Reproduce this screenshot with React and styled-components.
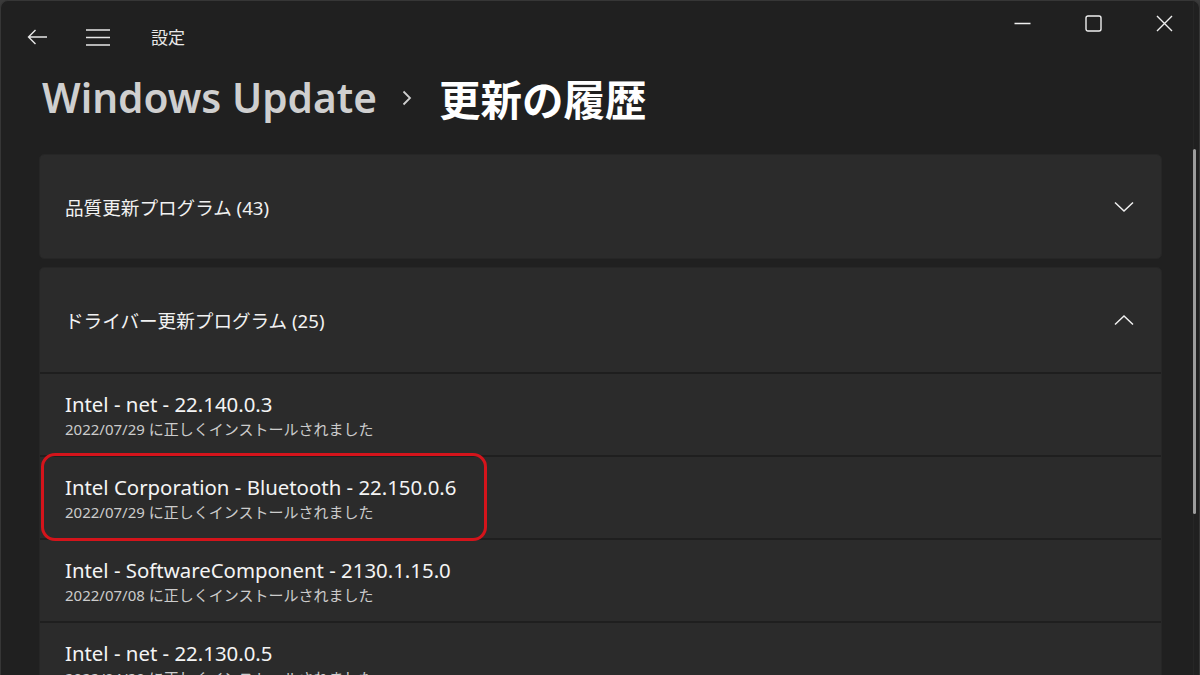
import React from "react";
import styled, { createGlobalStyle } from "styled-components";

const Global = createGlobalStyle`
  html, body { margin: 0; padding: 0; background: #3a3a3a; }
  body { font-family: "Noto Sans", "Noto Sans CJK JP", sans-serif; }
  * { box-sizing: border-box; }
`;

const Window = styled.div`
  position: relative;
  width: 1200px;
  height: 675px;
  background: #202020;
  border-radius: 8px 8px 0 0;
  border: 1px solid #363636;
  border-bottom: none;
  overflow: hidden;
  color: #fff;
`;

const TitleBar = styled.div`
  display: flex;
  align-items: flex-start;
  height: 73px;
`;

const NavGroup = styled.div`
  display: flex;
  align-items: center;
  height: 73px;
  padding-left: 25px;
`;

const IconButton = styled.div`
  display: flex;
  align-items: center;
  justify-content: center;
  width: ${(p) => p.w || 22}px;
  margin-right: ${(p) => p.mr || 0}px;
  margin-top: -1px;
`;

const AppTitle = styled.span`
  font-size: 17px;
  color: #e8e8e8;
  font-family: "Noto Sans CJK JP", sans-serif;
  margin-top: -2px;
`;

const Control = styled.div`
  width: 71px;
  display: flex;
  justify-content: center;
  align-items: center;
`;

const Controls = styled.div`
  display: flex;
  margin-left: auto;
  height: 45px;
  align-items: center;
  margin-right: -1px;
`;

const Header = styled.h1`
  margin: 0 0 32px 41px;
  display: flex;
  align-items: center;
  height: 48px;
  font-size: 40.6px;
  font-weight: 600;
  line-height: 48px;
  font-family: "Noto Sans", "Noto Sans CJK JP", sans-serif;
`;

const Crumb = styled.span`
  color: #cfcfcf;
`;

const Current = styled.span`
  color: #ffffff;
  font-family: "Noto Sans CJK JP", sans-serif;
  font-weight: 700;
  font-size: 41.5px;
`;

const CrumbSep = styled.span`
  display: flex;
  margin: 0 27px 0 25px;
`;

const Content = styled.div`
  display: flex;
  flex-direction: column;
  gap: 8px;
  margin-left: 38px;
  width: 1123px;
`;

const Card = styled.div`
  background: #2b2b2b;
  border-radius: 5px 5px ${(p) => (p.open ? "0 0" : "5px 5px")};
  border: 1px solid #262626;
  overflow: hidden;
`;

const CardHeader = styled.div`
  display: flex;
  align-items: center;
  height: ${(p) => (p.open ? 106 : 103)}px;
  padding: 0 27px 0 25px;
  border-bottom: ${(p) => (p.open ? "2px solid #1e1e1e" : "none")};
`;

const CardTitle = styled.span`
  font-size: 18.6px;
  color: #f2f2f2;
  flex: 1;
  margin-top: ${(p) => (p.open ? -2 : 0)}px;
  font-family: "Noto Sans", "Noto Sans CJK JP", sans-serif;
`;

const Item = styled.div`
  position: relative;
  height: 83px;
  padding: 16px 25px 0;
  border-bottom: 2px solid #1f1f1f;
`;

const ItemTitle = styled.div`
  font-size: 20.4px;
  line-height: 28px;
  color: #f4f4f4;
  font-family: "Noto Sans", "Noto Sans CJK JP", sans-serif;
`;

const ItemSub = styled.div`
  font-size: 15px;
  line-height: 22px;
  color: #cccccc;
  font-family: "Noto Sans", "Noto Sans CJK JP", sans-serif;
`;

const Highlight = styled.div`
  position: absolute;
  left: 1px;
  top: -4px;
  width: 446px;
  height: 88px;
  border: 3px solid #d4141b;
  border-radius: 14px;
  pointer-events: none;
`;

const ScrollThumb = styled.div`
  position: absolute;
  right: 3px;
  top: 148px;
  width: 3px;
  height: 365px;
  background: #9c9c9c;
  border-radius: 2px;
`;

const ScrollTrack = styled.div`
  position: absolute;
  right: 5px;
  top: 0;
  width: 1px;
  height: 675px;
  background: #262626;
`;

const Chevron = ({ up }) => (
  <svg width="20" height="12" viewBox="0 0 20 12">
    <polyline
      points={up ? "1,10.5 10,2 19,10.5" : "1,1.5 10,10 19,1.5"}
      fill="none"
      stroke="#f0f0f0"
      strokeWidth="1.5"
    />
  </svg>
);

const items = [
  { t: "Intel - net - 22.140.0.3", d: "2022/07/29" },
  { t: "Intel Corporation - Bluetooth - 22.150.0.6", d: "2022/07/29", hl: true },
  { t: "Intel - SoftwareComponent - 2130.1.15.0", d: "2022/07/08" },
  { t: "Intel - net - 22.130.0.5", d: "2022/04/29" },
];

export default function App() {
  return (
    <>
      <Global />
      <Window>
        <TitleBar>
          <NavGroup>
            <IconButton w={22} mr={38}>
              <svg width="21" height="16" viewBox="0 0 21 16">
                <path d="M20 8H1.5M8.5 1L1.5 8l7 7" fill="none" stroke="#e6e6e6" strokeWidth="1.4" />
              </svg>
            </IconButton>
            <IconButton w={24} mr={41}>
              <svg width="24" height="17" viewBox="0 0 24 17">
                <path d="M0 1h24M0 8.5h24M0 16h24" fill="none" stroke="#e6e6e6" strokeWidth="1.4" />
              </svg>
            </IconButton>
            <AppTitle>設定</AppTitle>
          </NavGroup>
          <Controls>
            <Control>
              <svg width="17" height="17" viewBox="0 0 17 17">
                <path d="M0.5 8.5h16" stroke="#f0f0f0" strokeWidth="1.3" />
              </svg>
            </Control>
            <Control>
              <svg width="17" height="17" viewBox="0 0 17 17">
                <rect x="1" y="1" width="15" height="15" rx="2" fill="none" stroke="#f0f0f0" strokeWidth="1.4" />
              </svg>
            </Control>
            <Control>
              <svg width="17" height="17" viewBox="0 0 17 17">
                <path d="M1 1l15 15M16 1L1 16" stroke="#f0f0f0" strokeWidth="1.4" />
              </svg>
            </Control>
          </Controls>
        </TitleBar>

        <Header>
          <Crumb>Windows Update</Crumb>
          <CrumbSep>
            <svg width="10" height="16" viewBox="0 0 10 16">
              <polyline points="1.5,1.5 8,8 1.5,14.5" fill="none" stroke="#cfcfcf" strokeWidth="1.8" />
            </svg>
          </CrumbSep>
          <Current>更新の履歴</Current>
        </Header>

        <Content>
          <Card>
            <CardHeader>
              <CardTitle>品質更新プログラム (43)</CardTitle>
              <Chevron />
            </CardHeader>
          </Card>
          <Card open>
            <CardHeader open>
              <CardTitle open>ドライバー更新プログラム (25)</CardTitle>
              <Chevron up />
            </CardHeader>
            {items.map((it, i) => (
              <Item key={i}>
                {it.hl && <Highlight />}
                <ItemTitle>{it.t}</ItemTitle>
                <ItemSub>{it.d} に正しくインストールされました</ItemSub>
              </Item>
            ))}
          </Card>
        </Content>

        <ScrollTrack />
        <ScrollThumb />
      </Window>
    </>
  );
}
